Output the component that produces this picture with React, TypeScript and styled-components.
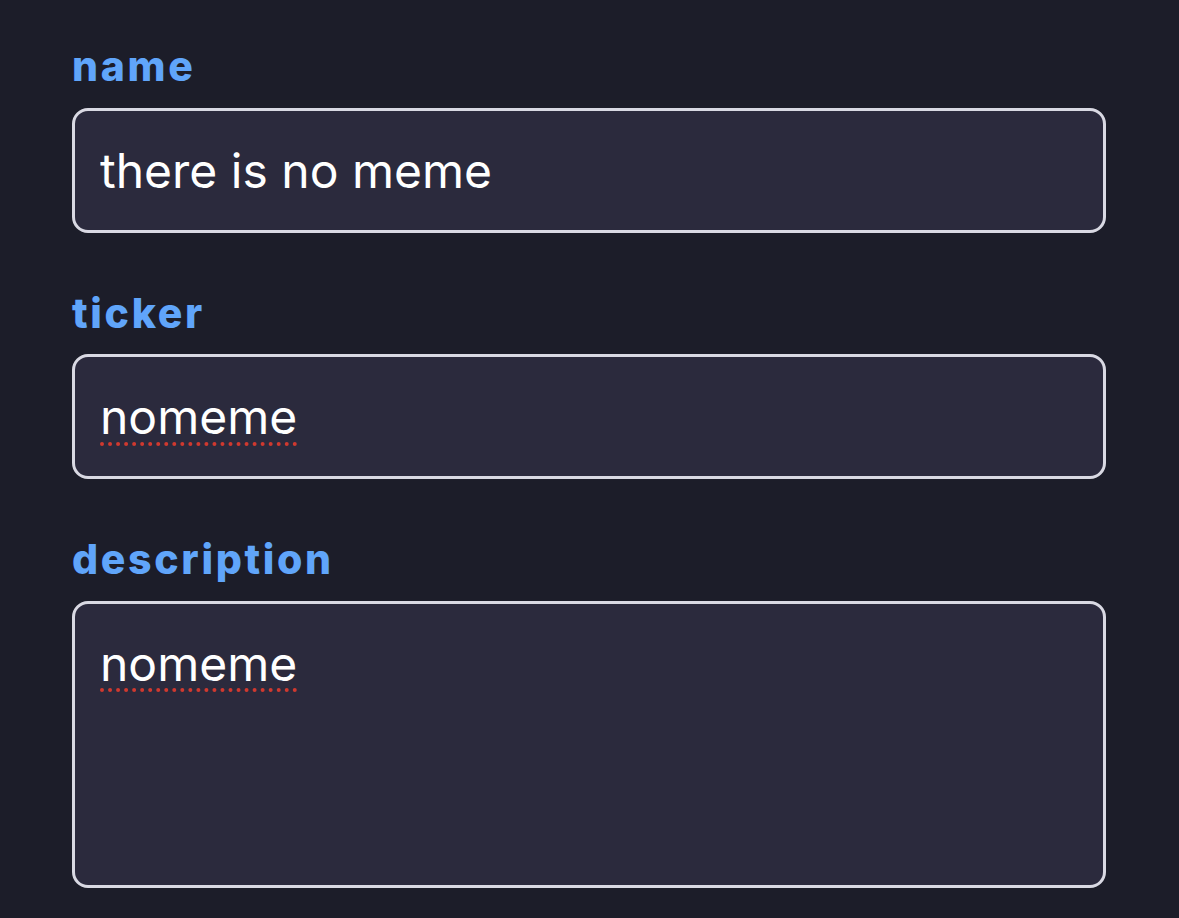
import styled, { createGlobalStyle } from "styled-components";

const GlobalStyle = createGlobalStyle`
  html, body {
    margin: 0;
    padding: 0;
    background: #1c1d29;
  }
  body {
    font-family: Inter, "Noto Sans", sans-serif;
  }
`;

const Form = styled.form`
  display: flex;
  flex-direction: column;
  gap: 56px;
  padding: 42px 73px 0 72px;
`;

const Field = styled.div`
  display: flex;
  flex-direction: column;
  gap: 16px;
`;

const Label = styled.label`
  font-family: Inter, "Noto Sans", sans-serif;
  font-size: 41px;
  line-height: 1.21;
  font-weight: 800;
  letter-spacing: 0.065em;
  color: #60a5fa;
`;

const TextInput = styled.input<{ $misspelled?: boolean }>`
  box-sizing: border-box;
  width: 100%;
  height: 125px;
  padding: 0 25px;
  border: 3px solid #d9d9e3;
  border-radius: 16px;
  background: #2b2a3d;
  color: #ffffff;
  font-family: Inter, "Noto Sans", sans-serif;
  font-size: 48px;
  outline: none;
  text-decoration: ${(p) => (p.$misspelled ? "underline dotted #d0392f" : "none")};
  text-decoration-thickness: 4px;
  text-underline-offset: 8px;
`;

const TextArea = styled.textarea<{ $misspelled?: boolean }>`
  box-sizing: border-box;
  width: 100%;
  height: 287px;
  padding: 26px 25px;
  border: 3px solid #d9d9e3;
  border-radius: 16px;
  background: #2b2a3d;
  color: #ffffff;
  font-family: Inter, "Noto Sans", sans-serif;
  font-size: 48px;
  line-height: 1.4;
  resize: none;
  outline: none;
  text-decoration: ${(p) => (p.$misspelled ? "underline dotted #d0392f" : "none")};
  text-decoration-thickness: 4px;
  text-underline-offset: 8px;
`;

const App = () => {
  return (
    <>
      <GlobalStyle />
      <Form onSubmit={(e) => e.preventDefault()}>
        <Field>
          <Label htmlFor="name">name</Label>
          <TextInput id="name" defaultValue="there is no meme" spellCheck={false} />
        </Field>
        <Field>
          <Label htmlFor="ticker">ticker</Label>
          <TextInput id="ticker" defaultValue="nomeme" spellCheck={false} $misspelled />
        </Field>
        <Field>
          <Label htmlFor="description">description</Label>
          <TextArea id="description" defaultValue="nomeme" spellCheck={false} $misspelled />
        </Field>
      </Form>
    </>
  );
};

export default App;
